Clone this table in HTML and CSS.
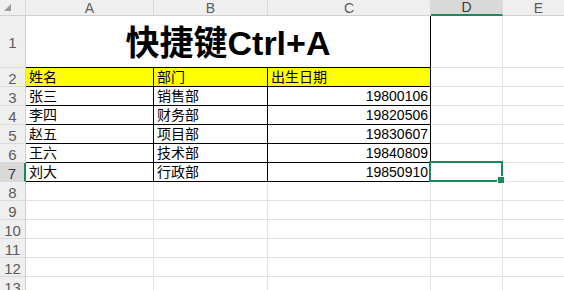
FILE: index.html
```html
<!DOCTYPE html>
<html lang="zh-CN">
<head>
    <meta charset="UTF-8">
    <title>快捷键Ctrl+A</title>
    <link rel="stylesheet" href="styles.css">
</head>
<body>
    <div class="sheet">
        <!-- column headers -->
        <div class="hd corner"><span class="tri"></span></div>
        <div class="hd">A</div>
        <div class="hd">B</div>
        <div class="hd">C</div>
        <div class="hd active-col">D</div>
        <div class="hd">E</div>

        <!-- row 1: merged title -->
        <div class="rh">1</div>
        <div class="cell title">快捷键Ctrl+A</div>
        <div class="cell"></div>
        <div class="cell"></div>

        <!-- row 2: field names -->
        <div class="rh">2</div>
        <div class="cell t yellow">姓名</div>
        <div class="cell t yellow">部门</div>
        <div class="cell t yellow">出生日期</div>
        <div class="cell"></div>
        <div class="cell"></div>

        <div class="rh">3</div>
        <div class="cell t">张三</div>
        <div class="cell t">销售部</div>
        <div class="cell t num">19800106</div>
        <div class="cell"></div>
        <div class="cell"></div>

        <div class="rh">4</div>
        <div class="cell t">李四</div>
        <div class="cell t">财务部</div>
        <div class="cell t num">19820506</div>
        <div class="cell"></div>
        <div class="cell"></div>

        <div class="rh">5</div>
        <div class="cell t">赵五</div>
        <div class="cell t">项目部</div>
        <div class="cell t num">19830607</div>
        <div class="cell"></div>
        <div class="cell"></div>

        <div class="rh">6</div>
        <div class="cell t">王六</div>
        <div class="cell t">技术部</div>
        <div class="cell t num">19840809</div>
        <div class="cell"></div>
        <div class="cell"></div>

        <div class="rh active-row">7</div>
        <div class="cell t">刘大</div>
        <div class="cell t">行政部</div>
        <div class="cell t num">19850910</div>
        <div class="cell selected"><span class="sel"></span></div>
        <div class="cell"></div>

        <div class="rh">8</div>
        <div class="cell"></div><div class="cell"></div><div class="cell"></div><div class="cell"></div><div class="cell"></div>
        <div class="rh">9</div>
        <div class="cell"></div><div class="cell"></div><div class="cell"></div><div class="cell"></div><div class="cell"></div>
        <div class="rh">10</div>
        <div class="cell"></div><div class="cell"></div><div class="cell"></div><div class="cell"></div><div class="cell"></div>
        <div class="rh">11</div>
        <div class="cell"></div><div class="cell"></div><div class="cell"></div><div class="cell"></div><div class="cell"></div>
        <div class="rh">12</div>
        <div class="cell"></div><div class="cell"></div><div class="cell"></div><div class="cell"></div><div class="cell"></div>
        <div class="rh">13</div>
        <div class="cell"></div><div class="cell"></div><div class="cell"></div><div class="cell"></div><div class="cell"></div>
    </div>
</body>
</html>
```

FILE: styles.css
```css
* {
    margin: 0;
    padding: 0;
    box-sizing: border-box;
}

body {
    font-family: 'Liberation Sans', 'Noto Sans CJK SC', sans-serif;
    background: #ffffff;
    color: #000000;
    overflow: hidden;
}

/* Worksheet grid */
.sheet {
    display: grid;
    grid-template-columns: 26px 128px 114px 163px 72px 72px;
    grid-template-rows: 16px 52px repeat(12, 19px);
    width: 564px;
}

/* Column and row headers */
.hd {
    background: #efefef;
    color: #5c5c5c;
    font-size: 14px;
    display: flex;
    align-items: center;
    justify-content: center;
    border-right: 1px solid #dadada;
    border-bottom: 1px solid #d0d0d0;
}

.corner {
    position: relative;
}

.tri {
    position: absolute;
    right: 14px;
    bottom: 4px;
    width: 0;
    height: 0;
    border-left: 7px solid transparent;
    border-bottom: 7px solid #9a9a9a;
}

.active-col {
    background: #d9d9d9;
    color: #3b3b3b;
    border-bottom: 2px solid #1a8a5a;
}

.rh {
    background: #efefef;
    color: #5c5c5c;
    font-size: 15px;
    display: flex;
    align-items: center;
    justify-content: center;
    padding-top: 2px;
    border-right: 1px solid #d0d0d0;
    border-bottom: 1px solid #dadada;
}

.active-row {
    background: #d9d9d9;
    color: #3b3b3b;
    border-right: 2px solid #1a8a5a;
}

/* Cells */
.cell {
    border-right: 1px solid #e1e1e1;
    border-bottom: 1px solid #e1e1e1;
    font-size: 14px;
    line-height: 18px;
    padding: 0 3px;
    display: flex;
    align-items: flex-end;
    white-space: nowrap;
}

.t {
    border-right-color: #000000;
    border-bottom-color: #000000;
}

.yellow {
    background: #ffff00;
}

.num {
    justify-content: flex-end;
    padding-right: 2px;
}

.title {
    grid-column: span 3;
    justify-content: center;
    align-items: center;
    font-size: 34px;
    font-weight: 700;
    line-height: 40px;
    padding-top: 2px;
    border-right-color: #000000;
    border-bottom-color: #000000;
}

/* Active cell outline */
.selected {
    position: relative;
}

.sel {
    position: absolute;
    top: -2px;
    left: -2px;
    right: -1px;
    bottom: -1px;
    border: 2px solid #1a8a5a;
}

.sel::after {
    content: '';
    position: absolute;
    right: -4px;
    bottom: -4px;
    width: 6px;
    height: 6px;
    background: #1a8a5a;
    border: 1px solid #ffffff;
}
```
